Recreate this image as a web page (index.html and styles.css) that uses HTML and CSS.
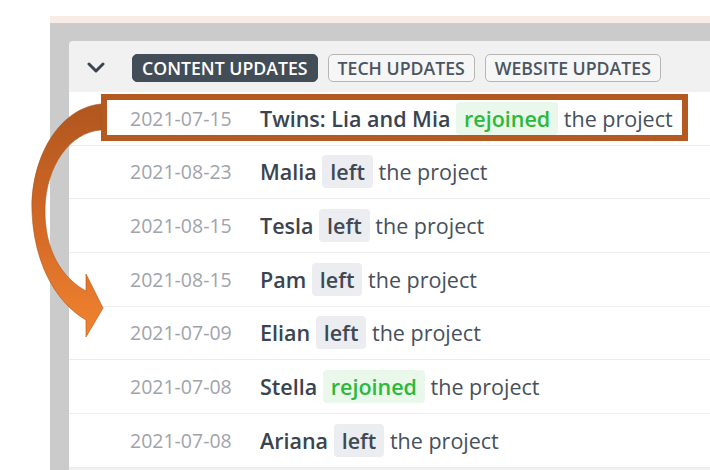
FILE: index.html
```html
<!DOCTYPE html>
<html>
<head>
<meta charset="utf-8">
<link rel="stylesheet" href="styles.css">
</head>
<body>
<div class="page">
  <div class="band"></div>
  <div class="frame">
    <div class="panel">
      <div class="header">
        <svg class="chevron" width="18" height="11" viewBox="0 0 18 11"><path d="M2 2 L9 9 L16 2" fill="none" stroke="#3b444f" stroke-width="3" stroke-linecap="round" stroke-linejoin="round"/></svg>
        <div class="tabs">
          <span class="tab active">CONTENT UPDATES</span>
          <span class="tab">TECH UPDATES</span>
          <span class="tab">WEBSITE UPDATES</span>
        </div>
      </div>
      <div class="rows">
        <div class="row"><span class="date">2021-07-15</span><span class="text"><b>Twins: Lia and Mia</b> <span class="tag green">rejoined</span> the project</span></div>
        <div class="row"><span class="date">2021-08-23</span><span class="text"><b>Malia</b> <span class="tag">left</span> the project</span></div>
        <div class="row"><span class="date">2021-08-15</span><span class="text"><b>Tesla</b> <span class="tag">left</span> the project</span></div>
        <div class="row"><span class="date">2021-08-15</span><span class="text"><b>Pam</b> <span class="tag">left</span> the project</span></div>
        <div class="row"><span class="date">2021-07-09</span><span class="text"><b>Elian</b> <span class="tag">left</span> the project</span></div>
        <div class="row"><span class="date">2021-07-08</span><span class="text"><b>Stella</b> <span class="tag green">rejoined</span> the project</span></div>
        <div class="row"><span class="date">2021-07-08</span><span class="text"><b>Ariana</b> <span class="tag">left</span> the project</span></div>
      </div>
    </div>
  </div>
</div>
<div class="highlight"></div>
<svg class="arrow" width="710" height="470" viewBox="0 0 710 470">
  <defs>
    <linearGradient id="ag" x1="0" y1="0" x2="0" y2="1">
      <stop offset="0" stop-color="#b0561f"/>
      <stop offset="0.55" stop-color="#d56a26"/>
      <stop offset="1" stop-color="#f2842f"/>
    </linearGradient>
  </defs>
  <path d="M101 104 C 58 108, 30 160, 32 212 C 34 262, 55 302, 86 320 L 86 337 L 103 308 L 86 274 L 86 291 C 62 278, 44 250, 45 208 C 46 166, 70 132, 101 130 Z" fill="url(#ag)" stroke="#b0561f" stroke-width="0.6"/>
</svg>
</body>
</html>
```

FILE: styles.css
```css
html, body {
  margin: 0;
  padding: 0;
  background: #ffffff;
  width: 710px;
  height: 470px;
  overflow: hidden;
  font-family: "Open Sans", "Noto Sans", sans-serif;
}

.page {
  padding: 16px 0 0 50px;
  height: 454px;
  display: flex;
  flex-direction: column;
}

.band {
  height: 7px;
  background: #f8ece6;
}

.frame {
  flex: 1;
  background: #cbcbcb;
  padding: 18px 0 0 19px;
  overflow: hidden;
}

.panel {
  background: #f1f1f1;
  border-top-left-radius: 4px;
  height: 100%;
}

.header {
  height: 51px;
  display: flex;
  align-items: center;
  padding-left: 18px;
}

.chevron {
  display: block;
  margin-top: 2px;
}

.tabs {
  display: flex;
  gap: 10px;
  margin-left: 27px;
  margin-top: 2px;
}

.tab {
  height: 28px;
  box-sizing: border-box;
  display: flex;
  align-items: center;
  padding: 0 9px;
  border: 1px solid #b6b6b6;
  border-radius: 5px;
  background: #f6f6f6;
  color: #4a5561;
  font-size: 17.7px;
  font-weight: 600;
}

.tab.active {
  background: #434d58;
  border-color: #434d58;
  color: #ffffff;
}

.rows {
  background: #ffffff;
}

.row {
  height: 52.67px;
  border-bottom: 1px solid #ececec;
  display: flex;
  align-items: center;
  padding-left: 61px;
  font-size: 21.5px;
  white-space: nowrap;
}

.date {
  width: 130px;
  color: #9fa4aa;
  font-size: 19.5px;
}

.text {
  color: #46505c;
}

.text b {
  font-weight: 600;
  color: #3a4450;
}

.tag {
  display: inline-block;
  line-height: 33px;
  padding: 0 8px;
  border-radius: 4px;
  background: #ebedf0;
  color: #3f4954;
  font-weight: 600;
}

.tag.green {
  background: #e9f8ea;
  color: #2cb83b;
}

.highlight {
  position: absolute;
  left: 101px;
  top: 94px;
  width: 587px;
  height: 47px;
  box-sizing: border-box;
  border: 6px solid #b4591f;
}

.arrow {
  position: absolute;
  left: 0;
  top: 0;
  pointer-events: none;
}
```
